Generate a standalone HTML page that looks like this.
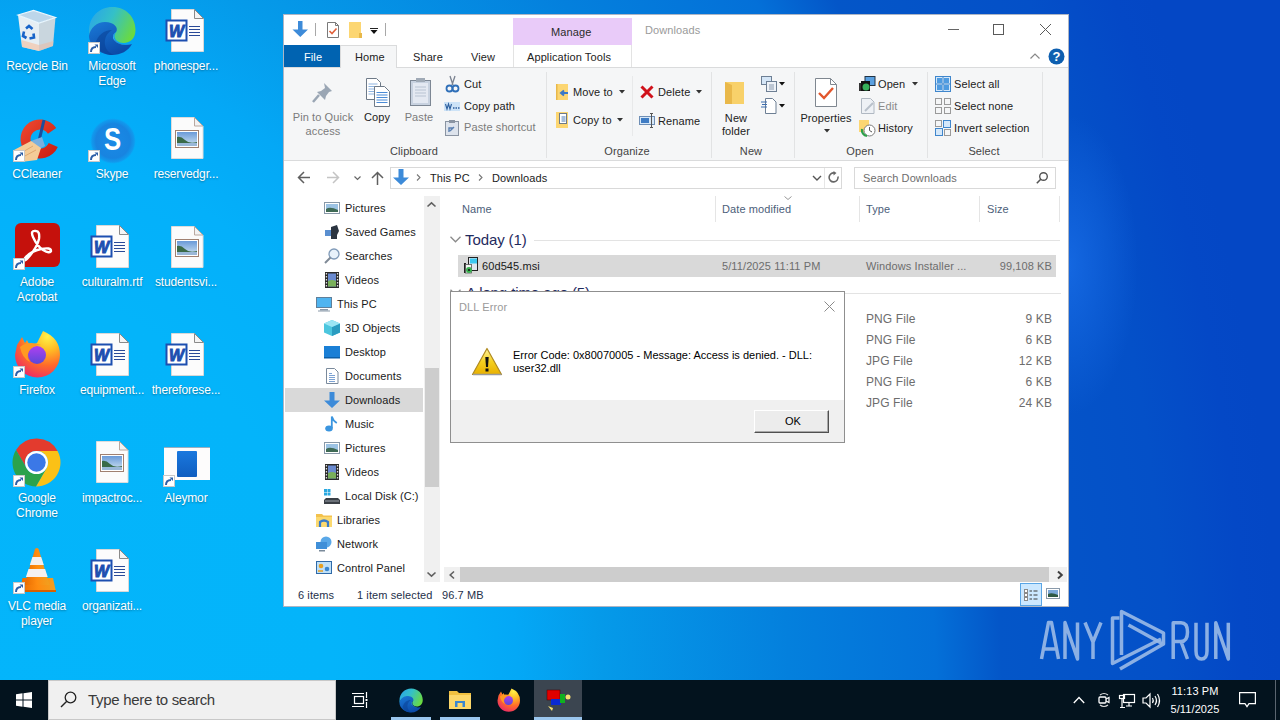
<!DOCTYPE html>
<html><head><meta charset="utf-8">
<style>
*{margin:0;padding:0;box-sizing:border-box}
html,body{width:1280px;height:720px;overflow:hidden}
body{position:relative;font-family:"Liberation Sans",sans-serif;font-size:12px;color:#000;
background:
 radial-gradient(ellipse 70px 150px at 1068px 265px, rgba(40,130,255,0.45), rgba(40,130,255,0) 100%),
 radial-gradient(1280px 1662px at 0px 720px,#04b5fb 0%,#04b4fa 26%,#04b0fa 34.5%,#04a8f6 40.6%,#059ae9 47.2%,#0480dd 61.7%,#0470d8 73.2%,#0456c8 78.3%,#0450c8 91.2%,#0448c6 97.2%,#0447c5 100%);}
.a{position:absolute}
.t{position:absolute;white-space:nowrap}
svg{position:absolute;overflow:visible}
.dl{position:absolute;width:76px;text-align:center;color:#fff;font-size:12px;line-height:15px;letter-spacing:-0.15px;text-shadow:0 1px 2px rgba(0,0,0,.35)}
</style></head><body>

<svg style="left:17px;top:9px" width="40" height="43" viewBox="0 0 40 43"><path d="M1 6L22 14L22 42L5 38z" fill="#e6eef3"/><path d="M22 14L38.5 8.5L36 37L22 42z" fill="#c9d6de"/><path d="M1 6L16.5 1.5L38.5 8.5L22 14z" fill="#bcd6ea" stroke="#eaf6fd" stroke-width="1.2"/><path d="M4.5 31L22 36V42L5 38z" fill="#f2c4a8" fill-opacity="0.7"/><path d="M22 36L36.5 32L36 37L22 42z" fill="#e8bca8" fill-opacity="0.6"/><g fill="none" stroke="#1763c8" stroke-width="2.6"><path d="M9 19.5l3-2.5 3.5 3"/><path d="M16.5 24.5l0.5 4-4.5 1"/><path d="M9.5 29l-3.5-2 1-4.5"/></g></svg>
<div class="dl" style="left:-1px;top:59px">Recycle Bin</div>
<svg style="left:88px;top:6px" width="48" height="49" viewBox="0 0 48 49"><defs><linearGradient id="ed1" x1="0" y1="0.2" x2="1" y2="0.6"><stop offset="0" stop-color="#2aa6e8"/><stop offset="0.45" stop-color="#34c0c8"/><stop offset="1" stop-color="#6ada40"/></linearGradient><linearGradient id="ed2" x1="0" y1="0" x2="0.6" y2="1"><stop offset="0" stop-color="#1a7ad8"/><stop offset="1" stop-color="#0c4aa8"/></linearGradient></defs><path d="M1 25C1 11 11 1 24.5 1 38 1 47.5 11 47.5 24c0 8-5 13-12 13-5 0-9-3-9-7 0-2 1-3 2-4.5C27 20 20 16 14 18 6 20 1 26 1 32z" fill="url(#ed1)"/><path d="M1 30C2 22 9 16 17 16c9 0 14 6 11 10-2 2-3 4-2 6 2 6 10 8 18 6-4 7-11 11-20 11C12 49 1 39 1 30z" fill="url(#ed2)"/><path d="M28 26c-2 2-3 4-2 6 2 6 10 8 18 6-6 2-14 1-18-4-2-3-1-6 2-8z" fill="#3ab4f0"/><path d="M7 38c3-9 9-14 17-14-5 3-8 8-7 15 1 5 4 8 9 10C16 49 9 44 7 38z" fill="#0a3f94" fill-opacity="0.55"/></svg>
<svg style="left:88px;top:42px" width="12" height="12" viewBox="0 0 12 12"><rect x="0" y="0" width="12" height="12" fill="#fff"/><rect x="0.5" y="0.5" width="11" height="11" fill="none" stroke="#c8c8c8"/><path d="M3 10q0-5 5-5" fill="none" stroke="#2d5fa8" stroke-width="2"/><path d="M6.5 2.5h3.5v3.5z" fill="#2d5fa8"/></svg>
<div class="dl" style="left:74px;top:59px">Microsoft<br>Edge</div>
<svg style="left:171px;top:9px" width="34" height="44" viewBox="0 0 34 44"><path d="M0.5 0.5h23l9 9v33h-32z" fill="#fcfcfc" stroke="#d8d8d8"/><path d="M23.5 0.5v9h9z" fill="#f4f4f4" stroke="#8a8a8a" stroke-linejoin="round"/><rect x="-4.5" y="11.5" width="20" height="20" fill="#fff" stroke="#1d4fb0" stroke-width="2"/><text x="5.5" y="28" font-family="Liberation Sans" font-style="italic" font-weight="bold" font-size="16" fill="#1d4fb0" stroke="#1d4fb0" stroke-width="0.9" text-anchor="middle">W</text><path d="M18 17.5h11M18 20.5h11M18 23.5h11M18 26.5h11" stroke="#2a4a98" stroke-width="1.2"/></svg>
<div class="dl" style="left:148px;top:59px">phonesper...</div>
<svg style="left:13px;top:115px" width="49" height="48" viewBox="0 0 49 48"><defs><linearGradient id="cc" x1="0" y1="0" x2="1" y2="1"><stop offset="0" stop-color="#f04a30"/><stop offset="1" stop-color="#c81a10"/></linearGradient></defs><path d="M43.2 13.1A19.5 19.5 0 1 0 44.8 31.9L35.7 27.9A9.5 9.5 0 1 1 34.9 18.7Z" fill="url(#cc)"/><path d="M31 5L25.5 28" stroke="#1a4f9e" stroke-width="3"/><path d="M18 26L29 22L32 31L22 36z" fill="#7ab0e0"/><path d="M1 35L18 26L28 33L24 45L8 47z" fill="#f4cc98"/><path d="M8 38L20 31M10 42L23 35" stroke="#e0a870" stroke-width="1"/></svg>
<svg style="left:13px;top:150px" width="12" height="12" viewBox="0 0 12 12"><rect x="0" y="0" width="12" height="12" fill="#fff"/><rect x="0.5" y="0.5" width="11" height="11" fill="none" stroke="#c8c8c8"/><path d="M3 10q0-5 5-5" fill="none" stroke="#2d5fa8" stroke-width="2"/><path d="M6.5 2.5h3.5v3.5z" fill="#2d5fa8"/></svg>
<div class="dl" style="left:-1px;top:167px">CCleaner</div>
<svg style="left:90px;top:118px" width="46" height="46" viewBox="0 0 46 46"><defs><radialGradient id="sk" cx="0.5" cy="0.5" r="0.5"><stop offset="0" stop-color="#1a8ae6"/><stop offset="0.75" stop-color="#1884e0"/><stop offset="0.92" stop-color="#1690e8" stop-opacity="0.7"/><stop offset="1" stop-color="#10a0f0" stop-opacity="0"/></radialGradient></defs><circle cx="23" cy="23" r="23" fill="url(#sk)"/><text x="0" y="0" transform="translate(22.5 32.3) scale(0.92 1.12)" font-family="Liberation Sans" font-weight="bold" font-size="28" fill="#fff" text-anchor="middle">S</text></svg>
<svg style="left:88px;top:150px" width="12" height="12" viewBox="0 0 12 12"><rect x="0" y="0" width="12" height="12" fill="#fff"/><rect x="0.5" y="0.5" width="11" height="11" fill="none" stroke="#c8c8c8"/><path d="M3 10q0-5 5-5" fill="none" stroke="#2d5fa8" stroke-width="2"/><path d="M6.5 2.5h3.5v3.5z" fill="#2d5fa8"/></svg>
<div class="dl" style="left:74px;top:167px">Skype</div>
<svg style="left:171px;top:117px" width="33" height="42" viewBox="0 0 33 42"><path d="M0.5 0.5h23l8.5 8.5v32.5h-31.5z" fill="#fbfbfb" stroke="#dcdcdc"/><path d="M23.5 0.5v8.5h8.5z" fill="#f2f2f2" stroke="#b8a8a0" stroke-linejoin="round"/><rect x="4.5" y="13.5" width="23" height="17" fill="#fff" stroke="#a08070"/><defs><linearGradient id="sky" x1="0" y1="0" x2="0" y2="1"><stop offset="0" stop-color="#6a9ad8"/><stop offset="1" stop-color="#d0e4f2"/></linearGradient></defs><rect x="6" y="15" width="20" height="14" fill="url(#sky)"/><path d="M6 20q4-1 8 3t12 2v2H6z" fill="#3a6a48"/><rect x="6" y="26" width="20" height="3" fill="#9ab8d8"/></svg>
<div class="dl" style="left:148px;top:167px">reservedgr...</div>
<svg style="left:15px;top:223px" width="45" height="44" viewBox="0 0 45 44"><rect x="0" y="0" width="45" height="44" rx="6" fill="#c5110c"/><path d="M21 8q4 0 3 8-2 9-12 20-3 3-2-1 6-7 16-9 10-2 10 2-1 3-8-1-6-4-10-13-3-7 3-6z" fill="none" stroke="#fff" stroke-width="2.4" stroke-linejoin="round"/></svg>
<svg style="left:13px;top:258px" width="12" height="12" viewBox="0 0 12 12"><rect x="0" y="0" width="12" height="12" fill="#fff"/><rect x="0.5" y="0.5" width="11" height="11" fill="none" stroke="#c8c8c8"/><path d="M3 10q0-5 5-5" fill="none" stroke="#2d5fa8" stroke-width="2"/><path d="M6.5 2.5h3.5v3.5z" fill="#2d5fa8"/></svg>
<div class="dl" style="left:-1px;top:275px">Adobe<br>Acrobat</div>
<svg style="left:96px;top:225px" width="34" height="44" viewBox="0 0 34 44"><path d="M0.5 0.5h23l9 9v33h-32z" fill="#fcfcfc" stroke="#d8d8d8"/><path d="M23.5 0.5v9h9z" fill="#f4f4f4" stroke="#8a8a8a" stroke-linejoin="round"/><rect x="-4.5" y="11.5" width="20" height="20" fill="#fff" stroke="#1d4fb0" stroke-width="2"/><text x="5.5" y="28" font-family="Liberation Sans" font-style="italic" font-weight="bold" font-size="16" fill="#1d4fb0" stroke="#1d4fb0" stroke-width="0.9" text-anchor="middle">W</text><path d="M18 17.5h11M18 20.5h11M18 23.5h11M18 26.5h11" stroke="#2a4a98" stroke-width="1.2"/></svg>
<div class="dl" style="left:74px;top:275px">culturalm.rtf</div>
<svg style="left:171px;top:226px" width="33" height="42" viewBox="0 0 33 42"><path d="M0.5 0.5h23l8.5 8.5v32.5h-31.5z" fill="#fbfbfb" stroke="#dcdcdc"/><path d="M23.5 0.5v8.5h8.5z" fill="#f2f2f2" stroke="#b8a8a0" stroke-linejoin="round"/><rect x="4.5" y="13.5" width="23" height="17" fill="#fff" stroke="#a08070"/><defs><linearGradient id="sky" x1="0" y1="0" x2="0" y2="1"><stop offset="0" stop-color="#6a9ad8"/><stop offset="1" stop-color="#d0e4f2"/></linearGradient></defs><rect x="6" y="15" width="20" height="14" fill="url(#sky)"/><path d="M6 20q4-1 8 3t12 2v2H6z" fill="#3a6a48"/><rect x="6" y="26" width="20" height="3" fill="#9ab8d8"/></svg>
<div class="dl" style="left:148px;top:275px">studentsvi...</div>
<svg style="left:14px;top:330px" width="47" height="48" viewBox="0 0 47 48"><defs><radialGradient id="fx" cx="0.72" cy="0.12" r="1"><stop offset="0" stop-color="#fff24a"/><stop offset="0.3" stop-color="#ffbc24"/><stop offset="0.62" stop-color="#ff6a2a"/><stop offset="1" stop-color="#e8226e"/></radialGradient><linearGradient id="fg" x1="0" y1="0" x2="0" y2="1"><stop offset="0" stop-color="#b040f0"/><stop offset="1" stop-color="#5a48d8"/></linearGradient></defs><path d="M1 25A22.5 22.5 0 0 0 46 25Q46 8 29 1L23 13L16 16L13 10L11 13L8 7L3 15Z" fill="url(#fx)"/><circle cx="23" cy="25" r="9" fill="url(#fg)"/><path d="M6 17Q14 10 27 15Q19 15 15 21Q12 27 16 32Q8 28 6 17z" fill="#ff9a22"/></svg>
<svg style="left:13px;top:366px" width="12" height="12" viewBox="0 0 12 12"><rect x="0" y="0" width="12" height="12" fill="#fff"/><rect x="0.5" y="0.5" width="11" height="11" fill="none" stroke="#c8c8c8"/><path d="M3 10q0-5 5-5" fill="none" stroke="#2d5fa8" stroke-width="2"/><path d="M6.5 2.5h3.5v3.5z" fill="#2d5fa8"/></svg>
<div class="dl" style="left:-1px;top:383px">Firefox</div>
<svg style="left:96px;top:333px" width="34" height="44" viewBox="0 0 34 44"><path d="M0.5 0.5h23l9 9v33h-32z" fill="#fcfcfc" stroke="#d8d8d8"/><path d="M23.5 0.5v9h9z" fill="#f4f4f4" stroke="#8a8a8a" stroke-linejoin="round"/><rect x="-4.5" y="11.5" width="20" height="20" fill="#fff" stroke="#1d4fb0" stroke-width="2"/><text x="5.5" y="28" font-family="Liberation Sans" font-style="italic" font-weight="bold" font-size="16" fill="#1d4fb0" stroke="#1d4fb0" stroke-width="0.9" text-anchor="middle">W</text><path d="M18 17.5h11M18 20.5h11M18 23.5h11M18 26.5h11" stroke="#2a4a98" stroke-width="1.2"/></svg>
<div class="dl" style="left:74px;top:383px">equipment...</div>
<svg style="left:171px;top:333px" width="34" height="44" viewBox="0 0 34 44"><path d="M0.5 0.5h23l9 9v33h-32z" fill="#fcfcfc" stroke="#d8d8d8"/><path d="M23.5 0.5v9h9z" fill="#f4f4f4" stroke="#8a8a8a" stroke-linejoin="round"/><rect x="-4.5" y="11.5" width="20" height="20" fill="#fff" stroke="#1d4fb0" stroke-width="2"/><text x="5.5" y="28" font-family="Liberation Sans" font-style="italic" font-weight="bold" font-size="16" fill="#1d4fb0" stroke="#1d4fb0" stroke-width="0.9" text-anchor="middle">W</text><path d="M18 17.5h11M18 20.5h11M18 23.5h11M18 26.5h11" stroke="#2a4a98" stroke-width="1.2"/></svg>
<div class="dl" style="left:148px;top:383px">thereforese...</div>
<svg style="left:12px;top:438px" width="49" height="49" viewBox="0 0 49 49"><path d="M24.50 13.00L45.57 13.00A24 24 0 0 0 4.01 12.01L14.54 30.25A11.5 11.5 0 0 1 24.50 13.00Z" fill="#e33b2e"/><path d="M24.50 13.00L45.57 13.00A24 24 0 0 1 23.93 48.49L34.46 30.25A11.5 11.5 0 0 0 24.50 13.00Z" fill="#fbc116"/><path d="M34.46 30.25L23.93 48.49A24 24 0 0 1 4.01 12.01L14.54 30.25A11.5 11.5 0 0 0 34.46 30.25Z" fill="#2ba24c"/><circle cx="24.5" cy="24.5" r="11.5" fill="#fff"/><circle cx="24.5" cy="24.5" r="9.2" fill="#3b78e7"/></svg>
<svg style="left:13px;top:475px" width="12" height="12" viewBox="0 0 12 12"><rect x="0" y="0" width="12" height="12" fill="#fff"/><rect x="0.5" y="0.5" width="11" height="11" fill="none" stroke="#c8c8c8"/><path d="M3 10q0-5 5-5" fill="none" stroke="#2d5fa8" stroke-width="2"/><path d="M6.5 2.5h3.5v3.5z" fill="#2d5fa8"/></svg>
<div class="dl" style="left:-1px;top:491px">Google<br>Chrome</div>
<svg style="left:96px;top:441px" width="33" height="42" viewBox="0 0 33 42"><path d="M0.5 0.5h23l8.5 8.5v32.5h-31.5z" fill="#fbfbfb" stroke="#dcdcdc"/><path d="M23.5 0.5v8.5h8.5z" fill="#f2f2f2" stroke="#b8a8a0" stroke-linejoin="round"/><rect x="4.5" y="13.5" width="23" height="17" fill="#fff" stroke="#a08070"/><defs><linearGradient id="sky" x1="0" y1="0" x2="0" y2="1"><stop offset="0" stop-color="#6a9ad8"/><stop offset="1" stop-color="#d0e4f2"/></linearGradient></defs><rect x="6" y="15" width="20" height="14" fill="url(#sky)"/><path d="M6 20q4-1 8 3t12 2v2H6z" fill="#3a6a48"/><rect x="6" y="26" width="20" height="3" fill="#9ab8d8"/></svg>
<div class="dl" style="left:74px;top:491px">impactroc...</div>
<svg style="left:164px;top:447px" width="46" height="33" viewBox="0 0 46 33"><rect x="0" y="0" width="46" height="33" fill="#fdfcfc"/><path d="M0 0.5H46" stroke="#5a7a98" stroke-opacity="0.6"/><defs><linearGradient id="al" x1="0" y1="0" x2="0" y2="1"><stop offset="0" stop-color="#1a78de"/><stop offset="1" stop-color="#105ec0"/></linearGradient></defs><rect x="13" y="4" width="20" height="26" rx="1" fill="url(#al)"/></svg>
<svg style="left:163px;top:475px" width="12" height="12" viewBox="0 0 12 12"><rect x="0" y="0" width="12" height="12" fill="#fff"/><rect x="0.5" y="0.5" width="11" height="11" fill="none" stroke="#c8c8c8"/><path d="M3 10q0-5 5-5" fill="none" stroke="#2d5fa8" stroke-width="2"/><path d="M6.5 2.5h3.5v3.5z" fill="#2d5fa8"/></svg>
<div class="dl" style="left:148px;top:491px">Aleymor</div>
<svg style="left:20px;top:548px" width="37" height="45" viewBox="0 0 37 45"><defs><linearGradient id="vl" x1="0" y1="0" x2="1" y2="0"><stop offset="0" stop-color="#e86a00"/><stop offset="0.5" stop-color="#ff8c10"/><stop offset="1" stop-color="#f0a020"/></linearGradient></defs><path d="M2.5 30H33L36 44H0z" fill="url(#vl)"/><path d="M0 42H36V44H0z" fill="#d86000"/><path d="M15 1Q16.8 -1 18.6 1L29.5 37H4.5z" fill="url(#vl)"/><path d="M12.4 9H21.2L23.8 17H9.8z" fill="#f4f0f0"/><path d="M8.5 21H25.1L27.7 29H5.9z" fill="#f4f0f0"/></svg>
<svg style="left:13px;top:582px" width="12" height="12" viewBox="0 0 12 12"><rect x="0" y="0" width="12" height="12" fill="#fff"/><rect x="0.5" y="0.5" width="11" height="11" fill="none" stroke="#c8c8c8"/><path d="M3 10q0-5 5-5" fill="none" stroke="#2d5fa8" stroke-width="2"/><path d="M6.5 2.5h3.5v3.5z" fill="#2d5fa8"/></svg>
<div class="dl" style="left:-1px;top:599px">VLC media<br>player</div>
<svg style="left:96px;top:549px" width="34" height="44" viewBox="0 0 34 44"><path d="M0.5 0.5h23l9 9v33h-32z" fill="#fcfcfc" stroke="#d8d8d8"/><path d="M23.5 0.5v9h9z" fill="#f4f4f4" stroke="#8a8a8a" stroke-linejoin="round"/><rect x="-4.5" y="11.5" width="20" height="20" fill="#fff" stroke="#1d4fb0" stroke-width="2"/><text x="5.5" y="28" font-family="Liberation Sans" font-style="italic" font-weight="bold" font-size="16" fill="#1d4fb0" stroke="#1d4fb0" stroke-width="0.9" text-anchor="middle">W</text><path d="M18 17.5h11M18 20.5h11M18 23.5h11M18 26.5h11" stroke="#2a4a98" stroke-width="1.2"/></svg>
<div class="dl" style="left:74px;top:599px">organizati...</div>
<div class="a" style="left:283px;top:14px;width:786px;height:593px;background:#fff;border:1px solid rgba(0,25,70,0.32)"></div>
<svg style="left:292px;top:21px" width="16" height="16" viewBox="0 0 16 16"><path d="M6 0h4.5v8.5H16L8.25 16 0.5 8.5H6z" fill="#3d8bd9"/></svg>
<div class="a" style="left:315px;top:23px;width:1px;height:13px;background:#a8a8a8;"></div>
<svg style="left:327px;top:22px" width="12" height="16" viewBox="0 0 12 16"><path d="M0.5 0.5h8l3 3v12h-11z" fill="#fff" stroke="#7a7a7a"/><path d="M8.5 0.5v3h3" fill="none" stroke="#7a7a7a"/><path d="M2.5 9l2.5 2.5 4.5-5" fill="none" stroke="#e0603a" stroke-width="1.6"/></svg>
<svg style="left:349px;top:22px" width="13" height="16" viewBox="0 0 13 16"><rect x="0" y="0" width="12" height="16" fill="#fcd672"/><rect x="10" y="11" width="3" height="5" fill="#e8b84a"/></svg>
<div class="a" style="left:370px;top:28px;width:8px;height:1px;background:#222;"></div>
<svg style="left:370px;top:30px" width="8" height="5" viewBox="0 0 8 5"><path d="M0.5 0h7L4 4z" fill="#111"/></svg>
<div class="a" style="left:385px;top:23px;width:1px;height:13px;background:#a8a8a8;"></div>
<div class="a" style="left:513px;top:18px;width:119px;height:27px;background:#e9cbf9;"></div>
<div class="t" style="top:27px;font-size:11px;line-height:11px;color:#2b2b2b;letter-spacing:0.1px;left:551px;">Manage</div>
<div class="t" style="top:25px;font-size:11px;line-height:11px;color:#9a9a9a;letter-spacing:0.1px;left:645px;">Downloads</div>
<div class="a" style="left:948px;top:29px;width:11px;height:1px;background:#666;"></div>
<div class="a" style="left:993px;top:24px;width:11px;height:11px;background:none;border:1px solid #5a5a5a"></div>
<svg style="left:1040px;top:24px" width="11" height="11" viewBox="0 0 11 11"><path d="M0 0L11 11M11 0L0 11" stroke="#5a5a5a" stroke-width="1"/></svg>
<div class="a" style="left:284px;top:45px;width:56px;height:23px;background:#0063b1;"></div>
<div class="t" style="top:52px;font-size:11px;line-height:11px;color:#fff;letter-spacing:0.1px;left:304px;">File</div>
<div class="a" style="left:340px;top:45px;width:57px;height:23px;background:#f5f6f7;border:1px solid #dadbdc;border-bottom:none"></div>
<div class="t" style="top:52px;font-size:11px;line-height:11px;color:#222;letter-spacing:0.1px;left:355px;">Home</div>
<div class="t" style="top:52px;font-size:11px;line-height:11px;color:#222;letter-spacing:0.1px;left:413px;">Share</div>
<div class="t" style="top:52px;font-size:11px;line-height:11px;color:#222;letter-spacing:0.1px;left:471px;">View</div>
<div class="a" style="left:513px;top:45px;width:119px;height:23px;background:#fff;border-left:1px solid #e3e3e3;border-right:1px solid #e3e3e3"></div>
<div class="t" style="top:52px;font-size:11px;line-height:11px;color:#222;letter-spacing:0.1px;left:527px;">Application Tools</div>
<svg style="left:1030px;top:53px" width="10" height="6" viewBox="0 0 10 6"><path d="M0.5 5.5L5 1l4.5 4.5" fill="none" stroke="#888" stroke-width="1.2"/></svg>
<svg style="left:1048px;top:48px" width="17" height="17" viewBox="0 0 17 17"><circle cx="8.5" cy="8.5" r="8" fill="#0e5fb0"/><text x="8.5" y="13.3" font-size="13" font-weight="bold" text-anchor="middle" fill="#fff" font-family="Liberation Sans">?</text></svg>
<div class="a" style="left:284px;top:67px;width:56px;height:1px;background:#dadbdc;"></div>
<div class="a" style="left:397px;top:67px;width:671px;height:1px;background:#dadbdc;"></div>
<div class="a" style="left:284px;top:68px;width:784px;height:92px;background:#f5f6f7;"></div>
<div class="a" style="left:284px;top:160px;width:784px;height:1px;background:#dadbdc;"></div>
<div class="a" style="left:546px;top:72px;width:1px;height:86px;background:#e2e3e4;"></div>
<div class="a" style="left:711px;top:72px;width:1px;height:86px;background:#e2e3e4;"></div>
<div class="a" style="left:794px;top:72px;width:1px;height:86px;background:#e2e3e4;"></div>
<div class="a" style="left:927px;top:72px;width:1px;height:86px;background:#e2e3e4;"></div>
<div class="a" style="left:1042px;top:72px;width:1px;height:86px;background:#e2e3e4;"></div>
<div class="a" style="left:632px;top:76px;width:1px;height:60px;background:#e8e9ea;"></div>
<svg style="left:312px;top:82px" width="22" height="21" viewBox="0 0 22 21"><path d="M12 1l8 8-3 1-3 4-1 4-8-8 4-1 4-3z" fill="#9aa6b4"/><path d="M7 13l-6 7" stroke="#9aa6b4" stroke-width="2.5"/></svg>
<div class="t" style="top:112px;font-size:11px;line-height:11px;color:#7b7b7b;letter-spacing:0.1px;left:173px;width:300px;text-align:center;">Pin to Quick</div>
<div class="t" style="top:126px;font-size:11px;line-height:11px;color:#7b7b7b;letter-spacing:0.1px;left:173px;width:300px;text-align:center;">access</div>
<svg style="left:366px;top:78px" width="25" height="29" viewBox="0 0 25 29"><path d="M0.5 0.5h10l4 4v17h-14z" fill="#fff" stroke="#6e7a88"/><g stroke="#8db3e0"><path d="M2.5 6h9M2.5 8.5h9M2.5 11h9M2.5 13.5h9M2.5 16h9"/></g><path d="M8.5 8.5h10l5 5v15h-15z" fill="#fff" stroke="#6e7a88"/><g stroke="#4a8bd6"><path d="M10.5 14.5h11M10.5 17h11M10.5 19.5h11M10.5 22h11M10.5 24.5h11"/></g></svg>
<div class="t" style="top:112px;font-size:11px;line-height:11px;color:#222;letter-spacing:0.1px;left:227px;width:300px;text-align:center;">Copy</div>
<svg style="left:410px;top:77px" width="21" height="29" viewBox="0 0 21 29"><rect x="0.5" y="3.5" width="20" height="25" fill="#c8d2e0" stroke="#7d8794"/><rect x="3" y="6" width="15" height="20" fill="#e4e9f2"/><rect x="6" y="1" width="9" height="4" fill="#a0aab6"/><g stroke="#b8c3d2"><path d="M5 10h11M5 13h11M5 16h11M5 19h11"/></g></svg>
<div class="t" style="top:112px;font-size:11px;line-height:11px;color:#7b7b7b;letter-spacing:0.1px;left:269px;width:300px;text-align:center;">Paste</div>
<svg style="left:446px;top:76px" width="13" height="17" viewBox="0 0 13 17"><path d="M4 0l3 9M9 0L6 9" stroke="#7a8290" stroke-width="1.3"/><circle cx="3.5" cy="12.5" r="3" fill="none" stroke="#2f6fb8" stroke-width="1.8"/><circle cx="9.5" cy="12.5" r="3" fill="none" stroke="#2f6fb8" stroke-width="1.8"/></svg>
<div class="t" style="top:79px;font-size:11px;line-height:11px;color:#222;letter-spacing:0.1px;left:464px;">Cut</div>
<svg style="left:444px;top:102px" width="16" height="9" viewBox="0 0 16 9"><rect x="0" y="0" width="16" height="9" fill="#cde3f7"/><path d="M1.5 2l1.5 5 1.5-5 1.5 5 1.5-5" fill="none" stroke="#2d5f9e" stroke-width="1.1"/><path d="M9 6h1.5M11.5 6h1.5M14 6h1.5" stroke="#2d5f9e" stroke-width="1.5"/></svg>
<div class="t" style="top:101px;font-size:11px;line-height:11px;color:#222;letter-spacing:0.1px;left:464px;">Copy path</div>
<svg style="left:445px;top:120px" width="14" height="16" viewBox="0 0 14 16"><rect x="0.5" y="1.5" width="13" height="14" fill="#dde3ec" stroke="#8a94a2"/><rect x="4" y="0" width="6" height="3" fill="#8a94a2"/><path d="M4 12v-4h4M5 11l4-4" stroke="#5a7fb0" stroke-width="1.4" fill="none"/></svg>
<div class="t" style="top:122px;font-size:11px;line-height:11px;color:#7b7b7b;letter-spacing:0.1px;left:464px;">Paste shortcut</div>
<div class="t" style="top:146px;font-size:11px;line-height:11px;color:#444;letter-spacing:0.1px;left:264px;width:300px;text-align:center;">Clipboard</div>
<svg style="left:556px;top:84px" width="13" height="17" viewBox="0 0 13 17"><rect x="0" y="0" width="12" height="16" fill="#fcd672"/><rect x="0" y="0" width="1.5" height="16" fill="#e8b84a"/><path d="M12 9H6M8 6.5L5 9l3 2.5" fill="none" stroke="#3a78c8" stroke-width="2"/></svg>
<div class="t" style="top:87px;font-size:11px;line-height:11px;color:#222;letter-spacing:0.1px;left:573px;">Move to</div>
<svg style="left:619px;top:90px" width="6" height="4" viewBox="0 0 6 4"><path d="M0 0h6L3 3.5z" fill="#333"/></svg>
<svg style="left:556px;top:112px" width="13" height="17" viewBox="0 0 13 17"><rect x="0" y="0" width="12" height="16" fill="#fcd672"/><rect x="3.5" y="1.5" width="7" height="10" fill="#fff" stroke="#6d7a8a"/><path d="M5.5 5h4M5.5 7h4M5.5 9h4" stroke="#4a7ab8"/></svg>
<div class="t" style="top:115px;font-size:11px;line-height:11px;color:#222;letter-spacing:0.1px;left:573px;">Copy to</div>
<svg style="left:617px;top:118px" width="6" height="4" viewBox="0 0 6 4"><path d="M0 0h6L3 3.5z" fill="#333"/></svg>
<svg style="left:640px;top:85px" width="14" height="14" viewBox="0 0 14 14"><path d="M1.5 1.5l11 11M12.5 1.5l-11 11" stroke="#d0121b" stroke-width="3"/></svg>
<div class="t" style="top:87px;font-size:11px;line-height:11px;color:#222;letter-spacing:0.1px;left:658px;">Delete</div>
<svg style="left:696px;top:90px" width="6" height="4" viewBox="0 0 6 4"><path d="M0 0h6L3 3.5z" fill="#333"/></svg>
<svg style="left:639px;top:113px" width="17" height="15" viewBox="0 0 17 15"><rect x="0.5" y="3.5" width="15" height="8" fill="#d7e8f8" stroke="#6f8fb6"/><rect x="2" y="5" width="8" height="5" fill="#3f7cc4"/><path d="M11 0.5h3M12.5 0.5v14M11 14.5h3" stroke="#555" stroke-width="1"/></svg>
<div class="t" style="top:116px;font-size:11px;line-height:11px;color:#222;letter-spacing:0.1px;left:658px;">Rename</div>
<div class="t" style="top:146px;font-size:11px;line-height:11px;color:#444;letter-spacing:0.1px;left:477px;width:300px;text-align:center;">Organize</div>
<svg style="left:725px;top:80px" width="20" height="24" viewBox="0 0 20 24"><path d="M0 2h19v22H0z" fill="#f8d16a"/><path d="M0 2l7 3v19H0z" fill="#e9b84a"/></svg>
<div class="t" style="top:113px;font-size:11px;line-height:11px;color:#222;letter-spacing:0.1px;left:586px;width:300px;text-align:center;">New</div>
<div class="t" style="top:126px;font-size:11px;line-height:11px;color:#222;letter-spacing:0.1px;left:586px;width:300px;text-align:center;">folder</div>
<svg style="left:761px;top:76px" width="17" height="16" viewBox="0 0 17 16"><rect x="0.5" y="0.5" width="10" height="8" fill="#d5e6f7" stroke="#6d7f94"/><rect x="5.5" y="5.5" width="10" height="10" fill="#eef2f7" stroke="#6d7f94"/><path d="M8 9h5M8 11h5M8 13h5" stroke="#8a9aae"/></svg>
<svg style="left:779px;top:82px" width="6" height="4" viewBox="0 0 6 4"><path d="M0 0h6L3 3.5z" fill="#111"/></svg>
<svg style="left:761px;top:98px" width="16" height="16" viewBox="0 0 16 16"><path d="M4.5 0.5h7l3.5 3.5v11.5h-10.5z" fill="#fff" stroke="#6d7f94"/><path d="M0 4h6M1 6.5h5M0 9h6" stroke="#3f6fb0" stroke-width="1.2"/></svg>
<svg style="left:779px;top:104px" width="6" height="4" viewBox="0 0 6 4"><path d="M0 0h6L3 3.5z" fill="#111"/></svg>
<div class="t" style="top:146px;font-size:11px;line-height:11px;color:#444;letter-spacing:0.1px;left:601px;width:300px;text-align:center;">New</div>
<svg style="left:815px;top:78px" width="22" height="29" viewBox="0 0 22 29"><path d="M0.5 0.5h15l6 6v22h-21z" fill="#fff" stroke="#7f8790"/><path d="M15.5 0.5v6h6" fill="none" stroke="#7f8790"/><path d="M4 15l5 5 9-10" fill="none" stroke="#e2562c" stroke-width="2.4"/></svg>
<div class="t" style="top:113px;font-size:11px;line-height:11px;color:#222;letter-spacing:0.1px;left:676px;width:300px;text-align:center;">Properties</div>
<svg style="left:824px;top:129px" width="6" height="4" viewBox="0 0 6 4"><path d="M0 0h6L3 3.5z" fill="#333"/></svg>
<svg style="left:859px;top:76px" width="17" height="16" viewBox="0 0 17 16"><rect x="6" y="0.5" width="10" height="9" fill="#5aa0e0" stroke="#234"/><rect x="2" y="5" width="9" height="10" fill="#111"/><circle cx="7" cy="11" r="3.5" fill="#36b05a"/><rect x="0" y="7" width="2" height="8" fill="#333"/></svg>
<div class="t" style="top:79px;font-size:11px;line-height:11px;color:#222;letter-spacing:0.1px;left:878px;">Open</div>
<svg style="left:912px;top:82px" width="6" height="4" viewBox="0 0 6 4"><path d="M0 0h6L3 3.5z" fill="#333"/></svg>
<svg style="left:861px;top:98px" width="14" height="16" viewBox="0 0 14 16"><path d="M0.5 0.5h9l3.5 3.5v11.5h-12.5z" fill="#eef1f5" stroke="#b0b8c2"/><path d="M4 13l8-8" stroke="#b8c0ca" stroke-width="2"/></svg>
<div class="t" style="top:101px;font-size:11px;line-height:11px;color:#8a8a8a;letter-spacing:0.1px;left:878px;">Edit</div>
<svg style="left:859px;top:120px" width="17" height="17" viewBox="0 0 17 17"><rect x="0" y="0" width="10" height="12" fill="#fcd672"/><circle cx="10.5" cy="10.5" r="5.5" fill="#fff" stroke="#7a7a7a"/><path d="M3 9a6 6 0 0 0 5 7" fill="none" stroke="#2fa04a" stroke-width="2.2"/><path d="M10.5 7v3.5l2.5 1.5" stroke="#555" fill="none"/></svg>
<div class="t" style="top:123px;font-size:11px;line-height:11px;color:#222;letter-spacing:0.1px;left:878px;">History</div>
<div class="t" style="top:146px;font-size:11px;line-height:11px;color:#444;letter-spacing:0.1px;left:710px;width:300px;text-align:center;">Open</div>
<svg style="left:935px;top:76px" width="16" height="16" viewBox="0 0 16 16"><rect x="0.5" y="0.5" width="15" height="15" fill="#d5e8fa" stroke="#3f86cc"/><path d="M8 0.5v15M0.5 8h15" stroke="#3f86cc"/><rect x="2" y="2" width="5" height="5" fill="#4f9be0"/><rect x="9" y="2" width="5" height="5" fill="#4f9be0"/><rect x="2" y="9" width="5" height="5" fill="#4f9be0"/><rect x="9" y="9" width="5" height="5" fill="#4f9be0"/></svg>
<div class="t" style="top:79px;font-size:11px;line-height:11px;color:#222;letter-spacing:0.1px;left:954px;">Select all</div>
<svg style="left:935px;top:98px" width="16" height="16" viewBox="0 0 16 16"><g fill="none" stroke="#9a9a9a"><rect x="0.5" y="0.5" width="6" height="6"/><rect x="9.5" y="0.5" width="6" height="6"/><rect x="0.5" y="9.5" width="6" height="6"/><rect x="9.5" y="9.5" width="6" height="6"/></g></svg>
<div class="t" style="top:101px;font-size:11px;line-height:11px;color:#222;letter-spacing:0.1px;left:954px;">Select none</div>
<svg style="left:935px;top:120px" width="16" height="16" viewBox="0 0 16 16"><g fill="#d5e8fa" stroke="#3f86cc"><rect x="8.5" y="0.5" width="7" height="7"/><rect x="0.5" y="8.5" width="7" height="7"/></g><g fill="none" stroke="#9a9a9a"><rect x="0.5" y="0.5" width="6" height="6"/><rect x="9.5" y="9.5" width="6" height="6"/></g></svg>
<div class="t" style="top:123px;font-size:11px;line-height:11px;color:#222;letter-spacing:0.1px;left:954px;">Invert selection</div>
<div class="t" style="top:146px;font-size:11px;line-height:11px;color:#444;letter-spacing:0.1px;left:834px;width:300px;text-align:center;">Select</div>
<svg style="left:297px;top:171px" width="14" height="13" viewBox="0 0 14 13"><path d="M13 6.5H1.5M7 1L1.5 6.5 7 12" fill="none" stroke="#5f5f5f" stroke-width="1.5"/></svg>
<svg style="left:327px;top:171px" width="13" height="13" viewBox="0 0 13 13"><path d="M0 6.5h11.5M6 1l5.5 5.5L6 12" fill="none" stroke="#c4c4c4" stroke-width="1.5"/></svg>
<svg style="left:354px;top:176px" width="7" height="4" viewBox="0 0 7 4"><path d="M0.5 0.5L3.5 3.5 6.5 0.5" fill="none" stroke="#666" stroke-width="1.2"/></svg>
<svg style="left:371px;top:171px" width="13" height="14" viewBox="0 0 13 14"><path d="M6.5 14V1.5M1 7l5.5-5.5L12 7" fill="none" stroke="#5f5f5f" stroke-width="1.5"/></svg>
<div class="a" style="left:390px;top:167px;width:452px;height:22px;background:#fff;border:1px solid #d9d9d9"></div>
<div class="a" style="left:824px;top:168px;width:1px;height:20px;background:#e6e6e6;"></div>
<svg style="left:393px;top:169px" width="16" height="16" viewBox="0 0 16 16"><path d="M5.5 0h5v8.5H16L8 16 0 8.5h5.5z" fill="#3d8bd9"/></svg>
<svg style="left:416px;top:174px" width="5" height="7" viewBox="0 0 5 7"><path d="M1 0.5l3 3-3 3" fill="none" stroke="#777" stroke-width="1.1"/></svg>
<div class="t" style="top:173px;font-size:11px;line-height:11px;color:#1a1a1a;letter-spacing:0.1px;left:430px;">This PC</div>
<svg style="left:478px;top:174px" width="5" height="7" viewBox="0 0 5 7"><path d="M1 0.5l3 3-3 3" fill="none" stroke="#777" stroke-width="1.1"/></svg>
<div class="t" style="top:173px;font-size:11px;line-height:11px;color:#1a1a1a;letter-spacing:0.1px;left:492px;">Downloads</div>
<svg style="left:812px;top:175px" width="10" height="6" viewBox="0 0 10 6"><path d="M1 1l4 4 4-4" fill="none" stroke="#555" stroke-width="1.4"/></svg>
<svg style="left:829px;top:171px" width="11" height="13" viewBox="0 0 11 13"><path d="M9 5.5A4.5 4.5 0 1 1 5.5 2" fill="none" stroke="#666" stroke-width="1.6"/><path d="M4.5 0l3 2-3 2.5z" fill="#666"/></svg>
<div class="a" style="left:854px;top:167px;width:202px;height:22px;background:#fff;border:1px solid #d9d9d9"></div>
<div class="t" style="top:173px;font-size:11px;line-height:11px;color:#6d6d6d;letter-spacing:0.1px;left:863px;">Search Downloads</div>
<svg style="left:1036px;top:172px" width="12" height="12" viewBox="0 0 12 12"><circle cx="7.5" cy="4.5" r="3.8" fill="none" stroke="#555" stroke-width="1.4"/><path d="M5 7L0.8 11.2" stroke="#555" stroke-width="1.6"/></svg>
<div class="a" style="left:285px;top:388px;width:138px;height:24px;background:#d9d9d9;"></div>
<div class="t" style="top:203px;font-size:11px;line-height:11px;color:#1a1a1a;letter-spacing:0.1px;left:345px;">Pictures</div>
<div class="t" style="top:227px;font-size:11px;line-height:11px;color:#1a1a1a;letter-spacing:0.1px;left:345px;">Saved Games</div>
<div class="t" style="top:251px;font-size:11px;line-height:11px;color:#1a1a1a;letter-spacing:0.1px;left:345px;">Searches</div>
<div class="t" style="top:275px;font-size:11px;line-height:11px;color:#1a1a1a;letter-spacing:0.1px;left:345px;">Videos</div>
<div class="t" style="top:299px;font-size:11px;line-height:11px;color:#1a1a1a;letter-spacing:0.1px;left:337px;">This PC</div>
<div class="t" style="top:323px;font-size:11px;line-height:11px;color:#1a1a1a;letter-spacing:0.1px;left:345px;">3D Objects</div>
<div class="t" style="top:347px;font-size:11px;line-height:11px;color:#1a1a1a;letter-spacing:0.1px;left:345px;">Desktop</div>
<div class="t" style="top:371px;font-size:11px;line-height:11px;color:#1a1a1a;letter-spacing:0.1px;left:345px;">Documents</div>
<div class="t" style="top:395px;font-size:11px;line-height:11px;color:#1a1a1a;letter-spacing:0.1px;left:345px;">Downloads</div>
<div class="t" style="top:419px;font-size:11px;line-height:11px;color:#1a1a1a;letter-spacing:0.1px;left:345px;">Music</div>
<div class="t" style="top:443px;font-size:11px;line-height:11px;color:#1a1a1a;letter-spacing:0.1px;left:345px;">Pictures</div>
<div class="t" style="top:467px;font-size:11px;line-height:11px;color:#1a1a1a;letter-spacing:0.1px;left:345px;">Videos</div>
<div class="t" style="top:491px;font-size:11px;line-height:11px;color:#1a1a1a;letter-spacing:0.1px;left:345px;">Local Disk (C:)</div>
<div class="t" style="top:515px;font-size:11px;line-height:11px;color:#1a1a1a;letter-spacing:0.1px;left:337px;">Libraries</div>
<div class="t" style="top:539px;font-size:11px;line-height:11px;color:#1a1a1a;letter-spacing:0.1px;left:337px;">Network</div>
<div class="t" style="top:563px;font-size:11px;line-height:11px;color:#1a1a1a;letter-spacing:0.1px;left:337px;">Control Panel</div>
<svg style="left:324px;top:202px" width="16" height="12" viewBox="0 0 16 12"><rect x="0.5" y="0.5" width="15" height="11" fill="#fff" stroke="#8898a8"/><rect x="2" y="2" width="12" height="8" fill="#9cc3e4"/><path d="M2 7q4-3 12 1v2H2z" fill="#3f6a55"/></svg>
<svg style="left:324px;top:224px" width="16" height="16" viewBox="0 0 16 16"><path d="M1 6h6v6H1z" fill="#5a8fd0"/><path d="M7 3l6-2 2 6-2 4v4H7z" fill="#2b3440"/></svg>
<svg style="left:324px;top:248px" width="16" height="16" viewBox="0 0 16 16"><circle cx="10" cy="6" r="5" fill="#e8f2fb" stroke="#7f9ab8" stroke-width="1.3"/><path d="M6.5 9.5L1 15" stroke="#7f8a96" stroke-width="2"/></svg>
<svg style="left:324px;top:272px" width="16" height="16" viewBox="0 0 16 16"><rect x="1" y="0" width="14" height="16" fill="#2a2a2a"/><rect x="4" y="1.5" width="8" height="13" fill="#6a8ad0"/><path d="M4 9q4-2 8 0v5.5H4z" fill="#7ab05a"/><g fill="#ddd"><rect x="1.8" y="1" width="1.3" height="1.5"/><rect x="1.8" y="4" width="1.3" height="1.5"/><rect x="1.8" y="7" width="1.3" height="1.5"/><rect x="1.8" y="10" width="1.3" height="1.5"/><rect x="1.8" y="13" width="1.3" height="1.5"/><rect x="12.9" y="1" width="1.3" height="1.5"/><rect x="12.9" y="4" width="1.3" height="1.5"/><rect x="12.9" y="7" width="1.3" height="1.5"/><rect x="12.9" y="10" width="1.3" height="1.5"/><rect x="12.9" y="13" width="1.3" height="1.5"/></g></svg>
<svg style="left:316px;top:296px" width="16" height="16" viewBox="0 0 16 16"><rect x="0.5" y="1.5" width="15" height="10" fill="#4fb4f0" stroke="#5f7f9a"/><rect x="4" y="13" width="8" height="1.5" fill="#8a9aaa"/><rect x="2" y="14.5" width="12" height="1" fill="#8a9aaa"/></svg>
<svg style="left:324px;top:320px" width="16" height="16" viewBox="0 0 16 16"><path d="M8 0l8 3.5v9L8 16 0 12.5v-9z" fill="#4cc6de"/><path d="M8 7l8-3.5v9L8 16z" fill="#2a9cc0"/><path d="M0 3.5L8 7l8-3.5L8 0z" fill="#9ce6f4"/></svg>
<svg style="left:324px;top:344px" width="16" height="16" viewBox="0 0 16 16"><rect x="0" y="2" width="16" height="12" fill="#1a7fd6"/><rect x="0" y="13" width="16" height="1.5" fill="#0c5fa8"/></svg>
<svg style="left:324px;top:368px" width="16" height="16" viewBox="0 0 16 16"><path d="M2.5 0.5h8l3.5 3.5v11.5h-11.5z" fill="#fff" stroke="#7a8a9c"/><path d="M5 5.5h3M5 7.5h6M5 9.5h6M5 11.5h6M5 13.5h6" stroke="#5a8ac8" stroke-width="0.8"/></svg>
<svg style="left:324px;top:392px" width="16" height="16" viewBox="0 0 16 16"><path d="M5.5 0h5v8.5H16L8 16 0 8.5h5.5z" fill="#3d8bd9"/></svg>
<svg style="left:324px;top:416px" width="16" height="16" viewBox="0 0 16 16"><ellipse cx="5" cy="12.5" rx="3.8" ry="3" fill="#3a95df"/><path d="M7.8 12V0.5q1 4 5 6.5" fill="none" stroke="#3a95df" stroke-width="1.8"/></svg>
<svg style="left:324px;top:442px" width="16" height="12" viewBox="0 0 16 12"><rect x="0.5" y="0.5" width="15" height="11" fill="#fff" stroke="#8898a8"/><rect x="2" y="2" width="12" height="8" fill="#9cc3e4"/><path d="M2 7q4-3 12 1v2H2z" fill="#3f6a55"/></svg>
<svg style="left:324px;top:464px" width="16" height="16" viewBox="0 0 16 16"><rect x="1" y="0" width="14" height="16" fill="#2a2a2a"/><rect x="4" y="1.5" width="8" height="13" fill="#6a8ad0"/><path d="M4 9q4-2 8 0v5.5H4z" fill="#7ab05a"/><g fill="#ddd"><rect x="1.8" y="1" width="1.3" height="1.5"/><rect x="1.8" y="4" width="1.3" height="1.5"/><rect x="1.8" y="7" width="1.3" height="1.5"/><rect x="1.8" y="10" width="1.3" height="1.5"/><rect x="1.8" y="13" width="1.3" height="1.5"/><rect x="12.9" y="1" width="1.3" height="1.5"/><rect x="12.9" y="4" width="1.3" height="1.5"/><rect x="12.9" y="7" width="1.3" height="1.5"/><rect x="12.9" y="10" width="1.3" height="1.5"/><rect x="12.9" y="13" width="1.3" height="1.5"/></g></svg>
<svg style="left:324px;top:488px" width="16" height="16" viewBox="0 0 16 16"><rect x="0" y="1" width="3" height="3" fill="#29a8e0"/><rect x="3.5" y="1" width="3" height="3" fill="#29a8e0"/><rect x="0" y="4.5" width="3" height="3" fill="#29a8e0"/><rect x="3.5" y="4.5" width="3" height="3" fill="#29a8e0"/><path d="M2 10h12l2 2v4H0v-4z" fill="#3a3f46"/><rect x="1" y="12" width="14" height="2" fill="#6a7078"/></svg>
<svg style="left:316px;top:512px" width="16" height="16" viewBox="0 0 16 16"><path d="M0 2h6l1.5 1.5H16V15H0z" fill="#f3c24e"/><rect x="0" y="5" width="16" height="10" fill="#fbd970"/><path d="M4 15v-5q4-3 8 0v5" fill="none" stroke="#3a7bc8" stroke-width="2.2"/></svg>
<svg style="left:316px;top:536px" width="16" height="16" viewBox="0 0 16 16"><circle cx="10" cy="6" r="5.5" fill="#5aa8e8"/><rect x="0" y="6" width="11" height="7" fill="#3f8fd8"/><rect x="3" y="14" width="6" height="1.5" fill="#7a8a9a"/></svg>
<svg style="left:316px;top:560px" width="16" height="16" viewBox="0 0 16 16"><rect x="0.5" y="1.5" width="15" height="12" fill="#bfe0f8" stroke="#2f6aa8"/><circle cx="5" cy="6" r="2.3" fill="#e8a020"/><circle cx="11" cy="9" r="2.3" fill="#3a86d0"/><path d="M2 11h5" stroke="#e8a020" stroke-width="1.5"/></svg>
<div class="a" style="left:424px;top:196px;width:16px;height:386px;background:#f0f0f0;"></div>
<div class="a" style="left:425px;top:368px;width:14px;height:119px;background:#cdcdcd;"></div>
<svg style="left:427px;top:202px" width="9" height="5" viewBox="0 0 9 5"><path d="M0.5 4.5L4.5 0.8 8.5 4.5" fill="none" stroke="#606060" stroke-width="1.6"/></svg>
<svg style="left:427px;top:572px" width="9" height="5" viewBox="0 0 9 5"><path d="M0.5 0.5L4.5 4.2 8.5 0.5" fill="none" stroke="#606060" stroke-width="1.6"/></svg>
<div class="a" style="left:715px;top:196px;width:1px;height:26px;background:#e5e5e5;"></div>
<div class="a" style="left:859px;top:196px;width:1px;height:26px;background:#e5e5e5;"></div>
<div class="a" style="left:979px;top:196px;width:1px;height:26px;background:#e5e5e5;"></div>
<div class="a" style="left:1059px;top:196px;width:1px;height:26px;background:#e5e5e5;"></div>
<div class="t" style="top:204px;font-size:11px;line-height:11px;color:#4c607a;letter-spacing:0.1px;left:462px;">Name</div>
<div class="t" style="top:204px;font-size:11px;line-height:11px;color:#4c607a;letter-spacing:0.1px;left:722px;">Date modified</div>
<div class="t" style="top:204px;font-size:11px;line-height:11px;color:#4c607a;letter-spacing:0.1px;left:866px;">Type</div>
<div class="t" style="top:204px;font-size:11px;line-height:11px;color:#4c607a;letter-spacing:0.1px;left:987px;">Size</div>
<svg style="left:784px;top:196px" width="8" height="4" viewBox="0 0 8 4"><path d="M0.5 0.5L4 3.5 7.5 0.5" fill="none" stroke="#999" stroke-width="1"/></svg>
<svg style="left:450px;top:236px" width="11" height="7" viewBox="0 0 11 7"><path d="M0.5 0.8L5.5 5.8 10.5 0.8" fill="none" stroke="#8a8a8a" stroke-width="1.3"/></svg>
<div class="t" style="top:232px;font-size:15px;line-height:15px;color:#1f2b5e;letter-spacing:-0.1px;left:465px;">Today (1)</div>
<div class="a" style="left:534px;top:240px;width:526px;height:1px;background:#e3e3e3;"></div>
<div class="a" style="left:458px;top:255px;width:598px;height:22px;background:#d9d9d9;"></div>
<svg style="left:463px;top:257px" width="16" height="17" viewBox="0 0 16 17"><rect x="5.5" y="0.5" width="9" height="13" fill="#dfe6ee" stroke="#222"/><rect x="7" y="1.5" width="7" height="5" fill="#3cc8f0"/><rect x="1" y="6" width="2" height="10" fill="#222"/><rect x="2.5" y="7.5" width="6" height="8.5" fill="#f4f4f4" stroke="#555" stroke-width="0.8"/><circle cx="6" cy="13" r="3" fill="#3ab050"/><circle cx="6" cy="13" r="1" fill="#111"/></svg>
<div class="t" style="top:261px;font-size:11px;line-height:11px;color:#1a1a1a;letter-spacing:0.1px;left:482px;">60d545.msi</div>
<div class="t" style="top:261px;font-size:11px;line-height:11px;color:#6d6d6d;letter-spacing:0.1px;left:722px;">5/11/2025 11:11 PM</div>
<div class="t" style="top:261px;font-size:11px;line-height:11px;color:#6d6d6d;letter-spacing:0.1px;left:866px;">Windows Installer ...</div>
<div class="t" style="top:261px;font-size:11px;line-height:11px;color:#6d6d6d;letter-spacing:0.1px;right:228px;">99,108 KB</div>
<svg style="left:450px;top:289px" width="11" height="7" viewBox="0 0 11 7"><path d="M0.5 0.8L5.5 5.8 10.5 0.8" fill="none" stroke="#8a8a8a" stroke-width="1.3"/></svg>
<div class="t" style="top:285px;font-size:15px;line-height:15px;color:#1f2b5e;letter-spacing:-0.1px;left:466px;">A long time ago (5)</div>
<div class="a" style="left:600px;top:293px;width:461px;height:1px;background:#e3e3e3;"></div>
<div class="t" style="top:313px;font-size:12px;line-height:12px;color:#6d6d6d;letter-spacing:0.1px;left:866px;">PNG File</div>
<div class="t" style="top:313px;font-size:12px;line-height:12px;color:#6d6d6d;letter-spacing:0.1px;right:228px;">9 KB</div>
<div class="t" style="top:334px;font-size:12px;line-height:12px;color:#6d6d6d;letter-spacing:0.1px;left:866px;">PNG File</div>
<div class="t" style="top:334px;font-size:12px;line-height:12px;color:#6d6d6d;letter-spacing:0.1px;right:228px;">6 KB</div>
<div class="t" style="top:355px;font-size:12px;line-height:12px;color:#6d6d6d;letter-spacing:0.1px;left:866px;">JPG File</div>
<div class="t" style="top:355px;font-size:12px;line-height:12px;color:#6d6d6d;letter-spacing:0.1px;right:228px;">12 KB</div>
<div class="t" style="top:376px;font-size:12px;line-height:12px;color:#6d6d6d;letter-spacing:0.1px;left:866px;">PNG File</div>
<div class="t" style="top:376px;font-size:12px;line-height:12px;color:#6d6d6d;letter-spacing:0.1px;right:228px;">6 KB</div>
<div class="t" style="top:397px;font-size:12px;line-height:12px;color:#6d6d6d;letter-spacing:0.1px;left:866px;">JPG File</div>
<div class="t" style="top:397px;font-size:12px;line-height:12px;color:#6d6d6d;letter-spacing:0.1px;right:228px;">24 KB</div>
<div class="a" style="left:444px;top:567px;width:623px;height:15px;background:#f0f0f0;"></div>
<div class="a" style="left:460px;top:567px;width:589px;height:15px;background:#cdcdcd;"></div>
<svg style="left:449px;top:571px" width="6" height="8" viewBox="0 0 6 8"><path d="M5 0.5L1.2 4 5 7.5" fill="none" stroke="#606060" stroke-width="1.6"/></svg>
<svg style="left:1057px;top:571px" width="6" height="8" viewBox="0 0 6 8"><path d="M1 0.5L4.8 4 1 7.5" fill="none" stroke="#404040" stroke-width="2"/></svg>
<div class="t" style="top:590px;font-size:11px;line-height:11px;color:#1e2f4a;letter-spacing:0.1px;left:298px;">6 items</div>
<div class="t" style="top:590px;font-size:11px;line-height:11px;color:#1e2f4a;letter-spacing:0.1px;left:357px;">1 item selected</div>
<div class="t" style="top:590px;font-size:11px;line-height:11px;color:#1e2f4a;letter-spacing:0.1px;left:442px;">96.7 MB</div>
<div class="a" style="left:1020px;top:583px;width:22px;height:23px;background:#cce8ff;border:1px solid #5aa6e6"></div>
<svg style="left:1024px;top:589px" width="14" height="12" viewBox="0 0 14 12"><g fill="#fff" stroke="#8a8a8a"><rect x="0.5" y="0.5" width="3" height="3"/><rect x="0.5" y="4.5" width="3" height="3"/><rect x="0.5" y="8.5" width="3" height="3"/></g><path d="M5.5 2h2.5M9.5 2h4M5.5 6h2.5M9.5 6h4M5.5 10h2.5M9.5 10h4" stroke="#3a3a3a" stroke-width="1"/></svg>
<svg style="left:1046px;top:588px" width="14" height="11" viewBox="0 0 14 11"><rect x="0.5" y="0.5" width="13" height="10" fill="#fff" stroke="#8a9aaa"/><rect x="2" y="2" width="10" height="7" fill="#7aa8d8"/><path d="M2 6q4-2 10 1v2H2z" fill="#2f5a45"/></svg>
<div class="a" style="left:450px;top:291px;width:395px;height:152px;background:#fff;border:1px solid #8f8f8f"></div>
<div class="t" style="top:302px;font-size:11px;line-height:11px;color:#9a9a9a;letter-spacing:0.1px;left:459px;">DLL Error</div>
<svg style="left:824px;top:301px" width="11" height="11" viewBox="0 0 11 11"><path d="M0.5 0.5L10.5 10.5M10.5 0.5L0.5 10.5" stroke="#8a8a8a" stroke-width="1"/></svg>
<svg style="left:471px;top:347px" width="32" height="30" viewBox="0 0 32 30"><defs><linearGradient id="wg" x1="0" y1="0" x2="0" y2="1"><stop offset="0" stop-color="#fff3a0"/><stop offset="0.5" stop-color="#f5d020"/><stop offset="1" stop-color="#e8b000"/></linearGradient></defs><path d="M16 1.5L30.5 27.5H1.5z" fill="url(#wg)" stroke="#b08a20" stroke-width="1.2" stroke-linejoin="round"/><path d="M2 27.5h28.5" stroke="#9a9a9a" stroke-width="1.5"/><path d="M14.3 10h3.4l-0.7 10h-2z" fill="#111"/><rect x="14.5" y="21.5" width="3" height="3" fill="#111"/></svg>
<div class="t" style="top:350px;font-size:11px;line-height:11px;color:#000;letter-spacing:0px;left:513px;">Error Code: 0x80070005 - Message: Access is denied. - DLL:</div>
<div class="t" style="top:363px;font-size:11px;line-height:11px;color:#000;letter-spacing:0px;left:513px;">user32.dll</div>
<div class="a" style="left:451px;top:400px;width:393px;height:42px;background:#f0f0f0;"></div>
<div class="a" style="left:754px;top:410px;width:75px;height:23px;background:#ececec;border-top:1px solid #fff;border-left:1px solid #fff;border-right:1px solid #505050;border-bottom:1px solid #505050;box-shadow:inset -1px -1px 0 #a8a8a8"></div>
<div class="t" style="top:416px;font-size:11px;line-height:11px;color:#000;letter-spacing:0px;left:785px;">OK</div>
<div class="a" style="left:0px;top:680px;width:1280px;height:40px;background:#03131e;"></div>
<svg style="left:16px;top:692px" width="16" height="16" viewBox="0 0 16 16"><g fill="#fff"><path d="M0 2.2l6.5-0.9v6.2H0z"/><path d="M7.5 1.2L16 0v7.5H7.5z"/><path d="M0 8.5h6.5v6.2L0 13.8z"/><path d="M7.5 8.5H16V16l-8.5-1.2z"/></g></svg>
<div class="a" style="left:48px;top:680px;width:288px;height:40px;background:#f0f0f0;border:1px solid #c8c8c8"></div>
<svg style="left:60px;top:691px" width="17" height="17" viewBox="0 0 17 17"><circle cx="10.5" cy="6.5" r="5.3" fill="none" stroke="#222" stroke-width="1.3"/><path d="M6.8 10.2L1 16" stroke="#222" stroke-width="1.4"/></svg>
<div class="t" style="top:692px;font-size:15px;line-height:15px;color:#3a3a3a;letter-spacing:-0.3px;left:88px;">Type here to search</div>
<svg style="left:352px;top:692px" width="16" height="16" viewBox="0 0 16 16"><g fill="none" stroke="#fff" stroke-width="1.2"><rect x="2.5" y="4.5" width="9" height="7"/><path d="M0 1.5h12M0 14.5h12M14.5 0v6M14.5 10v6"/></g><rect x="13.5" y="7" width="2" height="2" fill="#fff"/></svg>
<svg style="left:399px;top:688px" width="24" height="24" viewBox="0 0 24 24"><g transform="scale(0.5)"><path d="M1 25C1 11 11 1 24.5 1 38 1 47.5 11 47.5 24c0 8-5 13-12 13-5 0-9-3-9-7 0-2 1-3 2-4.5C27 20 20 16 14 18 6 20 1 26 1 32z" fill="url(#ed1)"/><path d="M1 30C2 22 9 16 17 16c9 0 14 6 11 10-2 2-3 4-2 6 2 6 10 8 18 6-4 7-11 11-20 11C12 49 1 39 1 30z" fill="url(#ed2)"/><path d="M28 26c-2 2-3 4-2 6 2 6 10 8 18 6-6 2-14 1-18-4-2-3-1-6 2-8z" fill="#3ab4f0"/><path d="M7 38c3-9 9-14 17-14-5 3-8 8-7 15 1 5 4 8 9 10C16 49 9 44 7 38z" fill="#0a3f94" fill-opacity="0.55"/></g></svg>
<div class="a" style="left:391px;top:717px;width:40px;height:3px;background:#9ac6ee;"></div>
<svg style="left:449px;top:691px" width="22" height="18" viewBox="0 0 22 18"><path d="M0 0h8l2 2h12v16H0z" fill="#f0c040"/><rect x="0" y="4" width="22" height="14" fill="#fcd76a"/><rect x="6" y="10" width="10" height="6" fill="#3a86d0"/><rect x="8.5" y="12" width="5" height="4" fill="#fcd76a"/></svg>
<div class="a" style="left:440px;top:717px;width:40px;height:3px;background:#9ac6ee;"></div>
<svg style="left:497px;top:688px" width="24" height="24" viewBox="0 0 24 24"><g transform="scale(0.5)"><path d="M1 25A22.5 22.5 0 0 0 46 25Q46 8 29 1L23 13L16 16L13 10L11 13L8 7L3 15Z" fill="url(#fx)"/><circle cx="23" cy="25" r="9" fill="url(#fg)"/><path d="M6 17Q14 10 27 15Q19 15 15 21Q12 27 16 32Q8 28 6 17z" fill="#ff9a22"/></g></svg>
<div class="a" style="left:534px;top:680px;width:48px;height:40px;background:#3b4550;"></div>
<div class="a" style="left:534px;top:717px;width:48px;height:3px;background:#9ac6ee;"></div>
<svg style="left:546px;top:689px" width="26" height="24" viewBox="0 0 26 24"><rect x="1" y="1" width="13" height="10" fill="#e00000" stroke="#400" stroke-width="0.5"/><rect x="5" y="10" width="10" height="6" fill="#0a2ad0"/><rect x="14" y="5" width="5" height="9" fill="#10b020"/><circle cx="22" cy="8" r="2.5" fill="#f8e070"/><path d="M2 17l5 2-1 3z" fill="#f8e070"/></svg>
<svg style="left:1073px;top:696px" width="12" height="8" viewBox="0 0 12 8"><path d="M0.8 7L6 1.5 11.2 7" fill="none" stroke="#fff" stroke-width="1.3"/></svg>
<svg style="left:1098px;top:692px" width="12" height="16" viewBox="0 0 12 16"><path d="M2 3q4-3 8 0M2 13q4 3 8 0" fill="none" stroke="#ddd" stroke-width="1.2"/><rect x="1" y="5" width="7" height="6" rx="1" fill="none" stroke="#fff" stroke-width="1.3"/><path d="M8 7l3-1.5v5L8 9" fill="none" stroke="#fff" stroke-width="1.2"/></svg>
<svg style="left:1119px;top:694px" width="16" height="14" viewBox="0 0 16 14"><rect x="4.5" y="0.5" width="11" height="8" fill="none" stroke="#fff" stroke-width="1.2"/><rect x="0.5" y="1.5" width="5" height="3" fill="none" stroke="#fff" stroke-width="1.2"/><path d="M3 4.5v9M1 13.5h5M10 8.5v3M7 12h6" stroke="#fff" stroke-width="1.2"/></svg>
<svg style="left:1142px;top:693px" width="18" height="15" viewBox="0 0 18 15"><path d="M1 5h3l4-4v13l-4-4H1z" fill="none" stroke="#fff" stroke-width="1.2"/><path d="M10.5 5q1.5 2.5 0 5M13 3q3 4.5 0 9M15.5 1q4 6.5 0 13" fill="none" stroke="#fff" stroke-width="1.2"/></svg>
<div class="t" style="top:686px;font-size:11px;line-height:11px;color:#fff;letter-spacing:0.1px;left:1045px;width:300px;text-align:center;">11:13 PM</div>
<div class="t" style="top:704px;font-size:11px;line-height:11px;color:#fff;letter-spacing:0.1px;left:1045px;width:300px;text-align:center;">5/11/2025</div>
<svg style="left:1239px;top:692px" width="17" height="16" viewBox="0 0 17 16"><path d="M0.6 0.6h15.8v11H10l-2 3-2-3H0.6z" fill="none" stroke="#fff" stroke-width="1.2"/></svg>
<div class="a" style="left:1275px;top:680px;width:1px;height:40px;background:#5a6570;"></div>
<svg style="left:1038px;top:608px" width="196" height="66" viewBox="0 0 196 66"><g fill="none" stroke="#98b8e6" stroke-opacity="0.92" stroke-width="3.5" stroke-linejoin="round"><path d="M3.5 51L10.5 14.5h3L20.5 51M6 41h11.5"/><path d="M27 51V14.5L39.5 51V14.5"/><path d="M47 14.5L55 34L63 14.5M55 34V51"/><path d="M81.5 10H74.5V55.5L123 31"/><path d="M83.5 47V3.5L125.5 25V36L82 61"/><path d="M90.5 17L124 35.5"/><path d="M135.2 51V14.8H143Q149.5 14.8 149.5 24Q149.5 33.5 143 33.5H135.2M143 33.5L149.5 51"/><path d="M158 14.8V43Q158 51 163.5 51Q169 51 169 43V14.8"/><path d="M177.8 51V14.8L190.3 51V14.8"/></g></svg>
</body></html>
